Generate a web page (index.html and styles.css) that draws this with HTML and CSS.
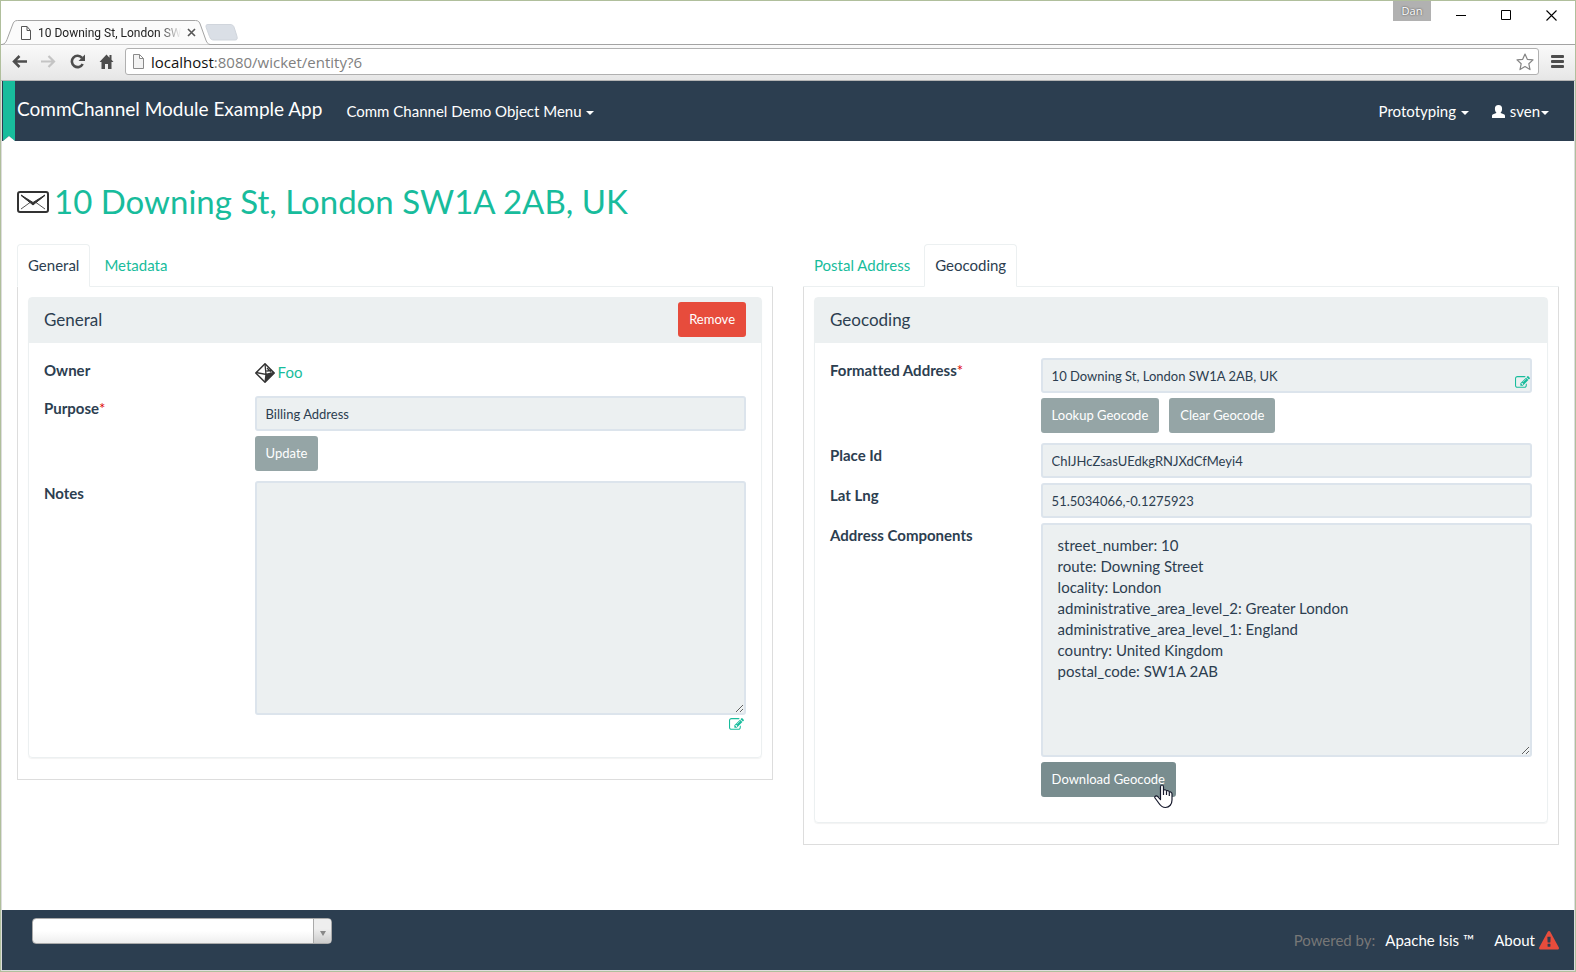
FILE: index.html
```html
<!DOCTYPE html>
<html lang="en">
<head>
<meta charset="utf-8">
<title>10 Downing St, London SW1A 2AB, UK</title>
<link rel="stylesheet" href="styles.css">
</head>
<body>
<svg class="defs" aria-hidden="true">
  <symbol id="edit" viewBox="0 0 1792 1792"><path d="M888 1184l116-116-152-152-116 116v56h96v96h56zm440-720q-16-16-33 1l-350 350q-17 17-1 33t33-1l350-350q17-17 1-33zm80 594v190q0 119-84.500 203.500t-203.500 84.500h-832q-119 0-203.500-84.500t-84.500-203.500v-832q0-119 84.500-203.500t203.500-84.500h832q63 0 117 25 15 7 18 23 3 17-9 29l-49 49q-14 14-32 8-23-6-45-6h-832q-66 0-113 47t-47 113v832q0 66 47 113t113 47h832q66 0 113-47t47-113v-126q0-13 9-22l64-64q15-15 35-7t20 29zm-96-738l288 288-672 672h-288v-288zm444 132l-92 92-288-288 92-92q28-28 68-28t68 28l152 152q28 28 28 68t-28 68z"/></symbol>
</svg>
<div class="window">
  <header class="tabstrip">
    <div class="browser-tab">
      <svg class="tab-shape" width="208" height="25" viewBox="0 0 208 25"><path d="M0 24.500C3 24 4 22 5 19.500L10.500 5C11.500 2 12.500 .500 15.500 .500H193.500C196.500 .500 197.500 2 198.500 5L203.500 19C204.500 22 205.500 24 208 24.500" fill="#fbfbfb" stroke="#a3a3a3"/></svg>
      <svg class="page-icon" width="10" height="14" viewBox="0 0 10 14"><path d="M.500 .500H6L9.500 4.500V13.500H.500ZM6 .500V4.500H9.500" fill="#fff" stroke="#555"/></svg>
      <span class="tab-title">10 Downing St, London SW</span>
      <button class="bare tab-close" aria-label="Close tab"><svg width="9" height="9" viewBox="0 0 9 9"><path d="M1 1L8 8M8 1L1 8" stroke="#555" stroke-width="1.600"/></svg></button>
    </div>
    <button class="bare new-tab" aria-label="New tab"><svg width="33" height="17" viewBox="0 0 33 17"><path d="M3 .500H25C27.500 .500 28.500 1.500 29.200 3.500L32 12.500C32.600 15 32 16 30 16H9C6.500 16 5.500 15 4.500 12.500L1.200 3.500C.600 1.500 1 .500 3 .500Z" fill="#dadfe6" stroke="#d0d5dc"/></svg></button>
    <div class="window-controls">
      <span class="profile">Dan</span>
      <button class="bare" aria-label="Minimize"><svg width="11" height="11" viewBox="0 0 11 11"><path d="M0 5.500H10" stroke="#000"/></svg></button>
      <button class="bare" aria-label="Maximize"><svg width="11" height="11" viewBox="0 0 11 11"><path d="M.500 .500H9.500V9.500H.500Z" fill="none" stroke="#000"/></svg></button>
      <button class="bare" aria-label="Close"><svg width="11" height="11" viewBox="0 0 11 11"><path d="M.500 .500L10.500 10.500M10.500 .500L.500 10.500" stroke="#000" stroke-width="1.100"/></svg></button>
    </div>
  </header>
  <div class="toolbar">
    <button class="bare" aria-label="Back"><svg width="15" height="13" viewBox="0 0 15 13"><path d="M7.500 1L2 6.500L7.500 12M2 6.500H15" fill="none" stroke="#4d4d4d" stroke-width="2.500"/></svg></button>
    <button class="bare" aria-label="Forward"><svg width="15" height="13" viewBox="0 0 15 13"><path d="M7.500 1L13 6.500L7.500 12M13 6.500H0" fill="none" stroke="#c4c4c4" stroke-width="2.200"/></svg></button>
    <button class="bare" aria-label="Reload"><svg width="15" height="15" viewBox="0 0 15 15"><path d="M12 3.800A5.700 5.700 0 1 0 12.700 10" fill="none" stroke="#4d4d4d" stroke-width="2.600"/><path d="M15 .500V7H8.500Z" fill="#4d4d4d"/></svg></button>
    <button class="bare" aria-label="Home"><svg width="15" height="15" viewBox="0 0 15 15"><path d="M7.500 .500L.500 8H2.500V15H6V10H9V15H12.500V8H14.500L12.500 5.800V1H10.500V3.700Z" fill="#4d4d4d"/></svg></button>
    <div class="address">
      <svg width="11" height="15" viewBox="0 0 11 15"><path d="M.500 .500H6.500L10.500 4.500V14.500H.500ZM6.500 .500V4.500H10.500" fill="#f3f3f3" stroke="#8a8a8a"/></svg>
      <span class="url"><b>localhost</b>:8080/wicket/entity?6</span>
      <svg width="18" height="18" viewBox="0 0 18 18"><path d="M9 1L11.300 6.300L17 6.900L12.800 10.700L14 16.600L9 13.600L4 16.600L5.200 10.700L1 6.900L6.700 6.300Z" fill="#fff" stroke="#858585" stroke-width="1.200" stroke-linejoin="round"/></svg>
    </div>
    <button class="bare menu" aria-label="Menu"><svg width="13" height="13" viewBox="0 0 13 13"><path d="M1 1.500H12M1 6.500H12M1 11.500H12" stroke="#4d4d4d" stroke-width="2.800" stroke-linecap="round"/></svg></button>
  </div>

  <div class="page">
    <nav class="navbar">
      <svg class="ribbon" width="12" height="60" viewBox="0 0 12 60"><path d="M0 0H12V60L6 55L0 60Z" fill="#18bc9c"/><path d="M0 60L6 55L12 60Z" fill="#fff"/></svg>
      <a class="brand" href="#">CommChannel Module Example App</a>
      <a class="nav-link" href="#">Comm Channel Demo Object Menu <i class="caret"></i></a>
      <div class="nav-right">
        <a class="nav-link" href="#">Prototyping <i class="caret"></i></a>
        <a class="nav-link user" href="#"><svg width="13" height="13" viewBox="0 0 13 13"><path d="M6.500 0C8.900 0 10.200 1.500 10.100 3.900C10 5.700 9.400 6.800 8.700 7.500V8L11.800 9.200C12.700 9.600 13 10 13 11V12.500Q13 13 12.500 13H.500Q0 13 0 12.500V11C0 10 .300 9.600 1.200 9.200L4.300 8V7.500C3.600 6.800 3 5.700 2.900 3.900C2.800 1.500 4.100 0 6.500 0Z" fill="#fff"/></svg><span>sven<i class="caret"></i></span></a>
      </div>
    </nav>

    <main class="content">
      <h1 class="title">
        <svg width="32" height="22" viewBox="0 0 32 22"><rect x="1" y="1" width="30" height="20" rx="2" fill="#fff" stroke="#333" stroke-width="2"/><path d="M4 4.500L13 11.500L4 18M28 4.500L19 11.500L28 18" fill="none" stroke="#555"/><path d="M4 4L16 11.500L28 4L16 14Z" fill="#333" stroke="#333"/></svg>
        <a href="#">10 Downing St, London SW1A 2AB, UK</a>
      </h1>
      <div class="columns">
        <section class="column">
          <div class="tabs"><a class="tab active" href="#">General</a><a class="tab" href="#">Metadata</a></div>
          <div class="tab-body">
            <div class="panel">
              <div class="panel-head"><h2>General</h2><button class="btn danger">Remove</button></div>
              <div class="panel-body">
                <div class="row owner">
                  <span class="label">Owner</span>
                  <a class="foo" href="#"><svg width="20" height="20" viewBox="0 0 20 20"><path d="M10 .800L19.200 10L10 19.200L.800 10Z" fill="#fff" stroke="#333" stroke-width="1.500"/><path d="M10 1L11 11.500L1 9.500M11 11.500L19 9.500M11 11.500L10 19M11.500 8L17 7.500M12 5L16 9" fill="none" stroke="#333" stroke-width="1.300"/><path d="M11 11.500L19 10L10 19Z" fill="#333"/></svg>Foo</a>
                </div>
                <div class="row">
                  <label class="label" for="purpose">Purpose<em>*</em></label>
                  <div class="field"><input id="purpose" class="control" value="Billing Address" readonly><div class="actions"><button class="btn">Update</button></div></div>
                </div>
                <div class="row">
                  <label class="label" for="notes">Notes</label>
                  <div class="field"><textarea id="notes" class="control area" readonly></textarea><a class="edit below" href="#" aria-label="Edit notes"><svg width="15" height="15"><use href="#edit"/></svg></a></div>
                </div>
              </div>
            </div>
          </div>
        </section>
        <section class="column">
          <div class="tabs"><a class="tab" href="#">Postal Address</a><a class="tab active" href="#">Geocoding</a></div>
          <div class="tab-body">
            <div class="panel">
              <div class="panel-head"><h2>Geocoding</h2></div>
              <div class="panel-body">
                <div class="row">
                  <label class="label" for="formatted">Formatted Address<em>*</em></label>
                  <div class="field"><input id="formatted" class="control" value="10 Downing St, London SW1A 2AB, UK" readonly><a class="edit over" href="#" aria-label="Edit address"><svg width="15" height="15"><use href="#edit"/></svg></a><div class="actions"><button class="btn">Lookup Geocode</button><button class="btn">Clear Geocode</button></div></div>
                </div>
                <div class="row">
                  <label class="label" for="place">Place Id</label>
                  <div class="field"><input id="place" class="control" value="ChIJHcZsasUEdkgRNJXdCfMeyi4" readonly></div>
                </div>
                <div class="row">
                  <label class="label" for="latlng">Lat Lng</label>
                  <div class="field"><input id="latlng" class="control" value="51.5034066,-0.1275923" readonly></div>
                </div>
                <div class="row">
                  <label class="label" for="components">Address Components</label>
                  <div class="field"><textarea id="components" class="control area" readonly>street_number: 10
route: Downing Street
locality: London
administrative_area_level_2: Greater London
administrative_area_level_1: England
country: United Kingdom
postal_code: SW1A 2AB</textarea>
                    <div class="actions"><span class="pointed"><button class="btn hover">Download Geocode</button><svg class="pointer" width="19" height="25" viewBox="0 0 19 25"><path d="M6.500 15.500V3C6.500 .300 9.500 .300 9.500 3V6.500C10 5.300 12.300 5.500 12.500 7.300C13.200 6.200 15.200 6.700 15.300 8.300C16.300 7.500 18 8.200 18 10V16C18 20 15.500 23.500 11.500 23.500C7 23.500 6 21 4 18L1 14C0 12 2.500 11.300 3.800 12.700Z" fill="#fff" stroke="#15182b" stroke-width="1.200" stroke-linejoin="round"/><path d="M9.500 6.500V11M12.500 7.500V11M15.300 8.500V12" stroke="#15182b" stroke-width="1.200"/></svg></span></div>
                  </div>
                </div>
              </div>
            </div>
          </div>
        </section>
      </div>
    </main>

    <footer class="footer">
      <div class="chooser"><select aria-label="Bookmarks"><option></option></select><span class="chooser-arrow"></span></div>
      <div class="credits"><span class="powered">Powered by:</span><a href="#">Apache Isis ™</a><a class="about" href="#">About <svg width="20" height="20" viewBox="0 0 1792 1792"><path d="M1024 1375v-190q0-14-9.500-23.500t-22.500-9.500h-192q-13 0-22.500 9.500t-9.500 23.500v190q0 14 9.500 23.500t22.500 9.500h192q13 0 22.500-9.500t9.500-23.500zm-2-374l18-459q0-12-10-19-13-11-24-11h-220q-11 0-24 11-10 7-10 21l17 457q0 10 10 16.500t24 6.500h185q14 0 23.500-6.500t10.500-16.500zm-14-934l768 1408q35 63-2 126-17 29-46.500 46t-63.500 17h-1536q-34 0-63.500-17t-46.500-46q-37-63-2-126l768-1408q17-31 47-49t65-18 65 18 47 49z" fill="#e74c3c"/></svg></a></div>
    </footer>
  </div>
</div>
</body>
</html>
```
FILE: styles.css
```css
* { box-sizing: border-box; }
body {
  margin: 0;
  font: 15px/21px Lato, "Open Sans", sans-serif;
  font-variant-ligatures: none;
  color: #2c3e50;
  background: #fff;
}
a { color: #18bc9c; text-decoration: none; }
svg { display: block; flex: none; }
.defs { position: absolute; width: 0; height: 0; }
.bare { border: 0; padding: 0; background: none; flex: none; }

.window {
  display: flex;
  flex-direction: column;
  min-height: 100vh;
  border: 1px solid #b0bf9c;
}

/* Browser chrome */
.tabstrip {
  display: flex;
  height: 44px;
  padding-left: 2px;
  border-bottom: 1px solid #a3a3a3;
  font: 12px/16px "Open Sans", "Noto Sans", sans-serif;
}
.browser-tab {
  position: relative;
  display: flex;
  align-items: center;
  width: 202px;
  height: 25px;
  margin-top: 19px;
  padding: 0 12px 0 18px;
}
.tab-shape { position: absolute; left: -1px; top: 0; }
.page-icon, .tab-title, .tab-close { position: relative; }
.tab-title {
  flex: 1;
  margin: 0 6px 0 7px;
  font-family: Roboto, "Open Sans", sans-serif;
  white-space: nowrap;
  color: #222;
  -webkit-mask-image: linear-gradient(to right, #000 85%, transparent);
  mask-image: linear-gradient(to right, #000 85%, transparent);
}
.new-tab { margin-top: 23px; align-self: flex-start; }
.window-controls {
  display: flex;
  align-items: flex-start;
  gap: 34px;
  margin-left: auto;
  padding-right: 18px;
}
.window-controls button { margin-top: 9px; }
.profile {
  width: 38px;
  margin-right: -9px;
  height: 20px;
  line-height: 20px;
  font-size: 11px;
  text-align: center;
  color: #fff;
  background: #b1b1b1;
  text-shadow: 0 0 2px #333;
}
.toolbar {
  display: flex;
  align-items: center;
  gap: 14px;
  height: 36px;
  padding: 0 11px 2px;
  background: linear-gradient(#fafafa, #e6e6e6);
  border-bottom: 1px solid #b5b5b5;
}
.address {
  display: flex;
  flex: 1;
  align-items: center;
  gap: 7px;
  height: 27px;
  margin-left: -3px;
  padding: 0 4px 0 7px;
  background: #fff;
  border: 1px solid #b0b0b0;
  border-radius: 3px;
}
.url {
  flex: 1;
  font: 15px/20px "Open Sans", "Noto Sans", sans-serif;
  color: #808080;
}
.url b { font-weight: 400; color: #111; }
.menu { margin-left: -2px; }

/* Application */
.page {
  display: flex;
  flex: 1;
  flex-direction: column;
  border: 1px solid #ddd;
  border-top: 0;
}
.navbar {
  position: relative;
  display: flex;
  align-items: center;
  height: 60px;
  padding: 0 25px 0 15px;
  background: #2c3e50;
}
.ribbon { position: absolute; left: 1px; top: 0; }
.navbar a { color: #fff; white-space: nowrap; }
.brand { margin-right: 24px; padding-bottom: 6px; font-size: 19px; }
.nav-right { display: flex; gap: 23px; margin-left: auto; }
.user { display: flex; align-items: center; gap: 5px; }
.caret {
  display: inline-block;
  margin-left: 1px;
  vertical-align: middle;
  border: 4px solid transparent;
  border-top-color: currentColor;
  border-bottom: 0;
}
.content { flex: 1; padding: 38px 15px 40px; }
.title {
  display: flex;
  align-items: center;
  gap: 5px;
  margin: 0 0 20px;
  font-size: 33px;
  line-height: 45px;
  font-weight: 400;
}
.columns { display: grid; grid-template-columns: 1fr 1fr; gap: 30px; align-items: start; }
.tabs { display: flex; gap: 3px; border-bottom: 1px solid #ecf0f1; }
.tab {
  margin-bottom: -1px;
  padding: 10px;
  border: 1px solid transparent;
  border-radius: 4px 4px 0 0;
}
.tab.active {
  color: #2c3e50;
  background: #fff;
  border-color: #ecf0f1;
  border-bottom-color: #fff;
}
.tab-body { padding: 10px 10px 21px; border: 1px solid #ddd; border-top: 0; }
.panel {
  border: 1px solid #ecf0f1;
  border-radius: 4px;
  box-shadow: 0 1px 1px rgba(0, 0, 0, .05);
}
.panel-head {
  display: flex;
  align-items: center;
  justify-content: space-between;
  height: 45px;
  padding: 0 15px 2px;
  background: #ecf0f1;
}
.panel-head h2 { margin: 0; font-size: 17px; font-weight: 400; }
.panel-body { padding: 15px 15px 20px; }
.row { display: grid; grid-template-columns: 3fr 7fr; margin-bottom: 5px; }
.owner { min-height: 33px; }
.label { padding-top: 2px; font-weight: 700; }
.label em { font-style: normal; font-weight: 400; color: #d00; }
.field { position: relative; min-width: 0; }
.foo { display: flex; align-items: center; align-self: start; gap: 3px; padding-top: 4px; }
.control {
  display: block;
  width: 100%;
  height: 35px;
  padding: 6px 9px;
  font: 13px/19px Lato, "Open Sans", sans-serif;
  font-variant-ligatures: none;
  color: #2c3e50;
  background: #ecf0f1;
  border: 2px solid #dce4ec;
  border-radius: 3px;
  outline: 0;
}
.area {
  height: 234px;
  padding: 10px 15px;
  font-size: 15px;
  line-height: 21px;
  resize: vertical;
}
.actions { display: flex; gap: 10px; padding: 5px 0; }
.area + .actions { padding-bottom: 0; }
.btn {
  height: 35px;
  padding: 6px 9px;
  font: 13px/19px Lato, "Open Sans", sans-serif;
  color: #fff;
  background: #95a5a6;
  border: 2px solid #95a5a6;
  border-radius: 3px;
}
.btn.hover { background: #798d8f; border-color: #798d8f; }
.btn.danger { background: #e74c3c; border-color: #e74c3c; }
.edit svg { fill: #18bc9c; }
.edit.below { display: flex; justify-content: flex-end; padding: 2px 2px 0; }
.edit.over { position: absolute; right: 2px; top: 17px; }
.pointed { position: relative; }
.pointer { position: absolute; right: 3px; bottom: -12px; }

.footer {
  display: flex;
  align-items: flex-start;
  justify-content: space-between;
  height: 60px;
  padding: 8px 15px 0 30px;
  background: #2c3e50;
}
.chooser { position: relative; }
.chooser select {
  display: block;
  width: 300px;
  height: 26px;
  appearance: none;
  border: 1px solid #aaa;
  border-radius: 4px;
  background: linear-gradient(#fff 50%, #eee);
}
.chooser-arrow {
  position: absolute;
  top: 1px;
  right: 1px;
  display: grid;
  place-items: center;
  width: 18px;
  height: 24px;
  border-left: 1px solid #aaa;
  border-radius: 0 3px 3px 0;
  background: linear-gradient(#eee 40%, #ccc);
  pointer-events: none;
}
.chooser-arrow::after {
  content: "";
  margin-top: 4px;
  border: 3px solid transparent;
  border-top: 5px solid #888;
  border-bottom: 0;
}
.credits { display: flex; align-items: center; padding-top: 12px; }
.credits a { color: #fff; }
.powered { margin-right: 10px; color: #777; }
.about { display: flex; align-items: center; gap: 4px; margin-left: 20px; }
```
